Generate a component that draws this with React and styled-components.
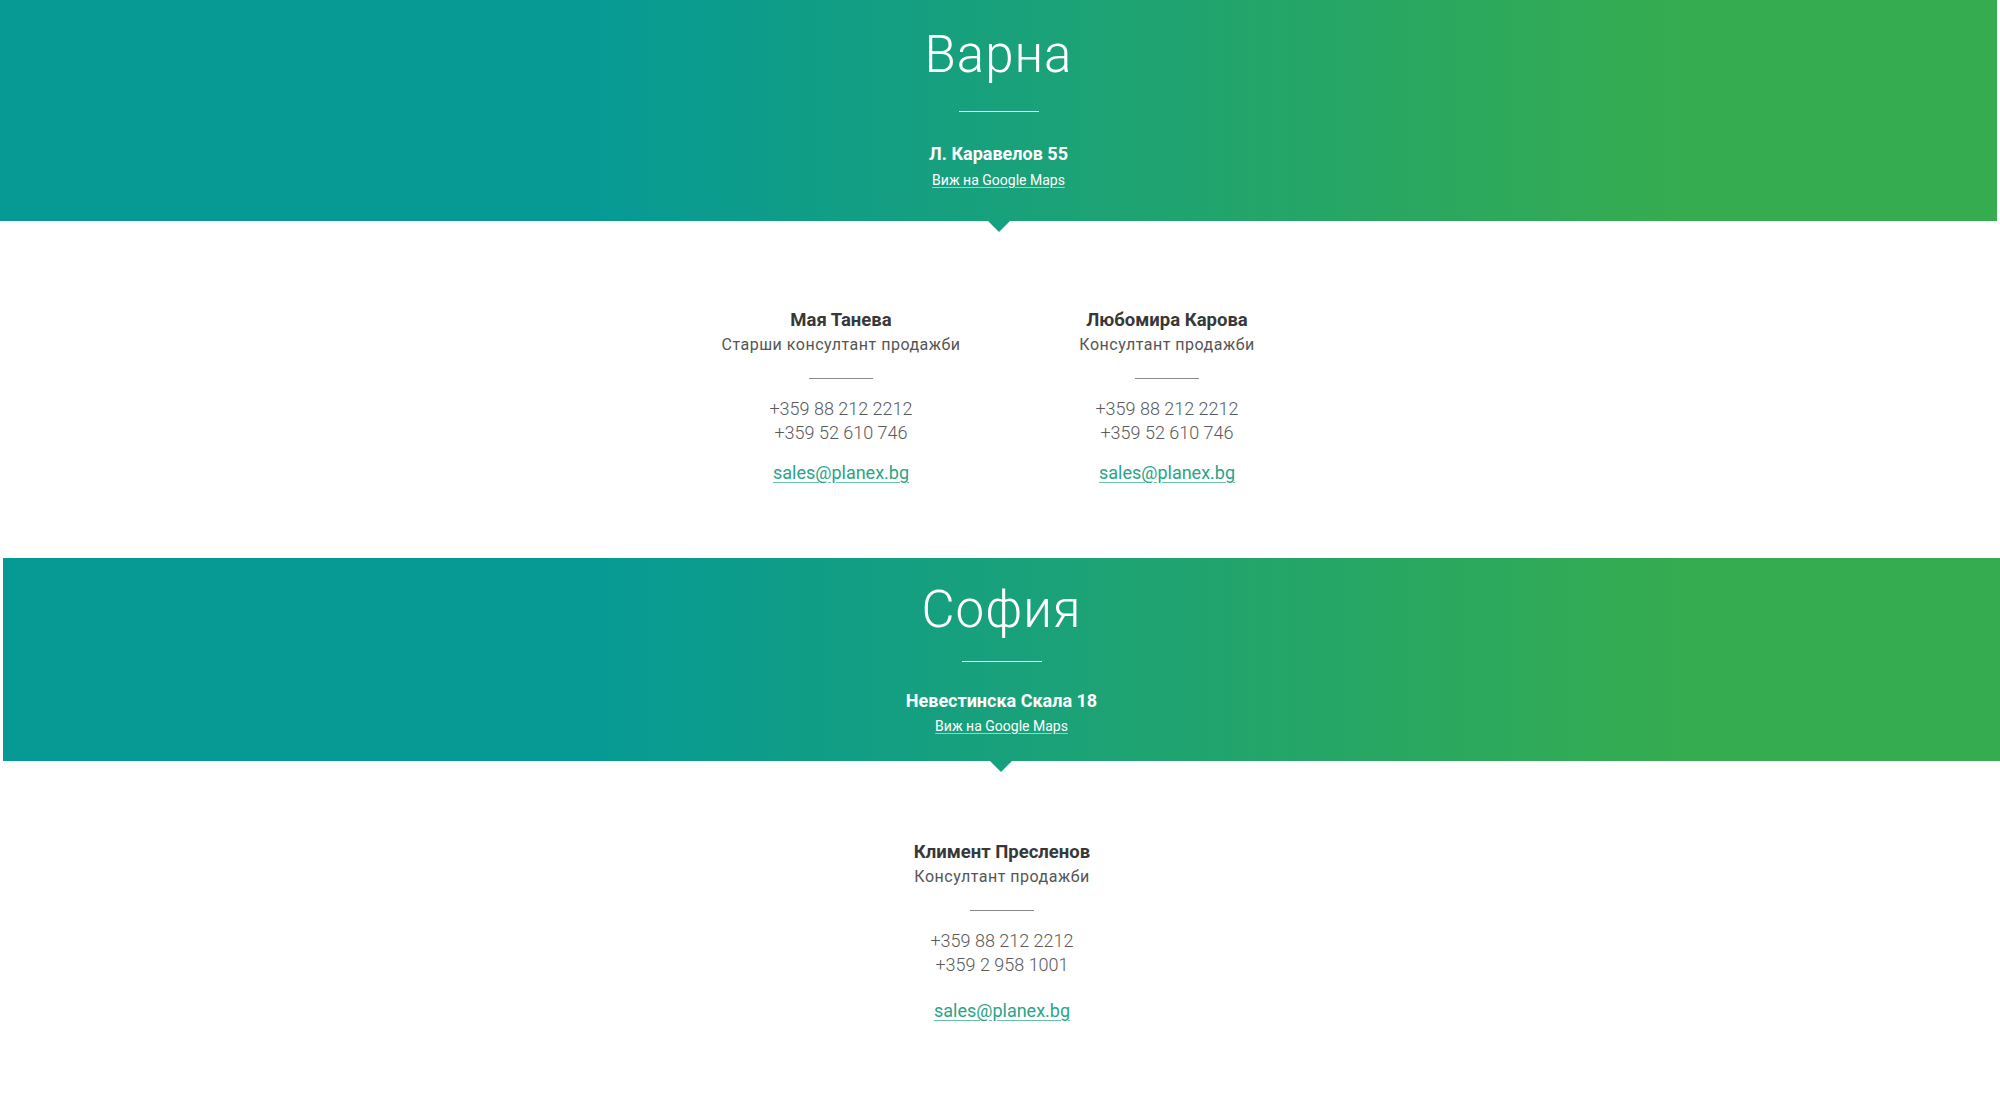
import React from 'react';
import styled, { createGlobalStyle } from 'styled-components';

const GlobalStyle = createGlobalStyle`
    html, body {
        margin: 0;
        padding: 0;
        background: #fff;
    }
    body {
        font-family: Roboto, "Noto Sans", "Liberation Sans", sans-serif;
        color: #333;
    }
`;

const Page = styled.div`
    width: 2000px;
    min-height: 1117px;
    overflow: hidden;
`;

const Banner = styled.section`
    position: relative;
    margin-left: ${props => props.$shift === 'right' ? '3px' : '0'};
    margin-right: ${props => props.$shift === 'left' ? '3px' : '0'};
    padding: ${props => props.$roomy ? '25px 0 31px' : '22px 0 25px'};
    background: linear-gradient(to right, #079a94 0%, #079a94 30%, #35ac50 84%, #35ac50 100%);
    color: #fff;
    text-align: center;

    &::after {
        content: '';
        position: absolute;
        left: 50%;
        bottom: -11px;
        margin-left: ${props => props.$shift === 'right' ? '-12px' : '-11px'};
        border-left: 11px solid transparent;
        border-right: 11px solid transparent;
        border-top: 11px solid #15a17f;
    }
`;

const City = styled.h2`
    margin: 0;
    font-size: 51px;
    font-weight: 300;
    line-height: 60px;
    letter-spacing: 1px;
`;

const Rule = styled.div`
    width: 80px;
    height: 1px;
    margin: ${props => props.$roomy ? '26px' : '21px'} auto 0;
    background: #fff;
`;

const Address = styled.div`
    margin-top: ${props => props.$roomy ? '32px' : '29px'};
    font-size: 18px;
    font-weight: 700;
    line-height: 20px;
`;

const MapLink = styled.a`
    display: inline-block;
    margin-top: ${props => props.$roomy ? '6px' : '5px'};
    font-size: 14px;
    line-height: 20px;
    color: #fff;
    text-decoration: underline;
    text-decoration-color: rgba(255, 255, 255, 0.55);
    text-underline-offset: 2px;
`;

const People = styled.div`
    display: flex;
    justify-content: center;
    box-sizing: border-box;
    height: ${props => props.$height};
    padding: ${props => props.$pad};
`;

const Card = styled.div`
    width: 326px;
    text-align: center;
`;

const Name = styled.div`
    font-size: 18.5px;
    font-weight: 700;
    line-height: 22px;
    color: #383838;
`;

const Role = styled.div`
    margin-top: 3px;
    font-size: 16px;
    line-height: 22px;
    color: #555;
    letter-spacing: 0.5px;
`;

const Divider = styled.div`
    width: 64px;
    height: 1px;
    margin: 22px auto 0;
    background: #8a8a8a;
`;

const Phones = styled.div`
    margin-top: 18px;
    font-size: 18px;
    font-weight: 300;
    line-height: 24px;
    color: #5a5a5a;
`;

const Email = styled.a`
    display: inline-block;
    margin-top: ${props => props.$gap};
    font-size: 18px;
    line-height: 22px;
    color: #2aa487;
    text-decoration: underline;
    text-decoration-color: rgba(42, 164, 135, 0.7);
    text-underline-offset: 3px;
`;

const offices = [
    {
        city: 'Варна',
        address: 'Л. Каравелов 55',
        roomy: true,
        shift: 'left',
        pad: '88px 0 0 8px',
        height: '337px',
        gap: '17px',
        people: [
            { name: 'Мая Танева', role: 'Старши консултант продажби', phones: ['+359 88 212 2212', '+359 52 610 746'] },
            { name: 'Любомира Карова', role: 'Консултант продажби', phones: ['+359 88 212 2212', '+359 52 610 746'] },
        ],
    },
    {
        city: 'София',
        address: 'Невестинска Скала 18',
        roomy: false,
        shift: 'right',
        pad: '80px 0 0 4px',
        height: '357px',
        gap: '23px',
        people: [
            { name: 'Климент Пресленов', role: 'Консултант продажби', phones: ['+359 88 212 2212', '+359 2 958 1001'] },
        ],
    },
];

function Person({ person, gap }) {
    return (
        <Card>
            <Name>{person.name}</Name>
            <Role>{person.role}</Role>
            <Divider />
            <Phones>
                {person.phones.map(p => <div key={p}>{p}</div>)}
            </Phones>
            <Email href="#" $gap={gap}>sales@planex.bg</Email>
        </Card>
    );
}

export default function App() {
    return (
        <Page>
            <GlobalStyle />
            {offices.map(office => (
                <div key={office.city}>
                    <Banner $roomy={office.roomy} $shift={office.shift}>
                        <City>{office.city}</City>
                        <Rule $roomy={office.roomy} />
                        <Address $roomy={office.roomy}>{office.address}</Address>
                        <MapLink href="#" $roomy={office.roomy}>Виж на Google Maps</MapLink>
                    </Banner>
                    <People $pad={office.pad} $height={office.height}>
                        {office.people.map(p => <Person key={p.name} person={p} gap={office.gap} />)}
                    </People>
                </div>
            ))}
        </Page>
    );
}
